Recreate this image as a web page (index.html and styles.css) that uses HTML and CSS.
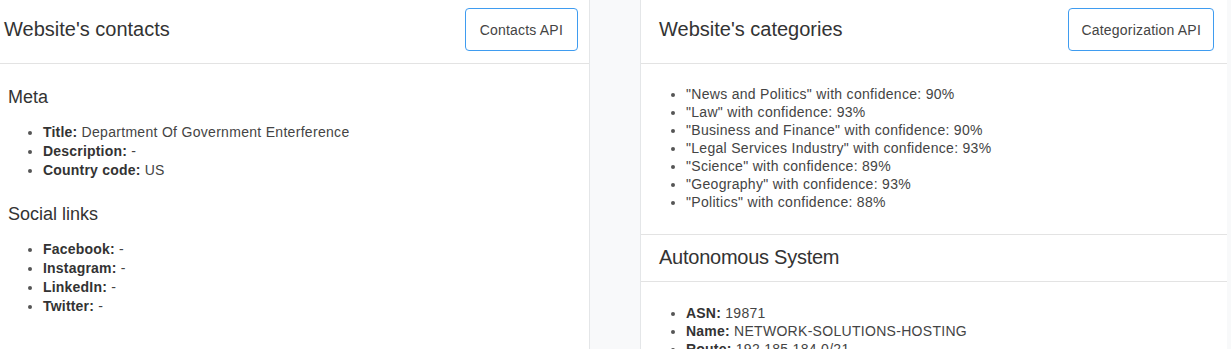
FILE: index.html
```html
<!DOCTYPE html>
<html lang="en">
<head>
<meta charset="utf-8">
<title>Website info</title>
<link rel="stylesheet" href="styles.css">
</head>
<body>
<div class="page">
	<section class="card card-left">
		<header class="card-header">
			<h2 class="card-title">Website's contacts</h2>
			<a class="btn-api" href="#none">Contacts API</a>
		</header>
		<div class="card-body contacts">
			<h3 class="sub-title">Meta</h3>
			<ul class="info-list">
				<li><strong>Title:</strong> Department Of Government Enterference</li>
				<li><strong>Description:</strong> -</li>
				<li><strong>Country code:</strong> US</li>
			</ul>
			<h3 class="sub-title">Social links</h3>
			<ul class="info-list">
				<li><strong>Facebook:</strong> -</li>
				<li><strong>Instagram:</strong> -</li>
				<li><strong>LinkedIn:</strong> -</li>
				<li><strong>Twitter:</strong> -</li>
			</ul>
		</div>
	</section>

	<section class="card card-right">
		<header class="card-header">
			<h2 class="card-title">Website's categories</h2>
			<a class="btn-api" href="#none">Categorization API</a>
		</header>
		<div class="card-body">
			<ul class="info-list">
				<li>"News and Politics" with confidence: 90%</li>
				<li>"Law" with confidence: 93%</li>
				<li>"Business and Finance" with confidence: 90%</li>
				<li>"Legal Services Industry" with confidence: 93%</li>
				<li>"Science" with confidence: 89%</li>
				<li>"Geography" with confidence: 93%</li>
				<li>"Politics" with confidence: 88%</li>
			</ul>
		</div>
		<header class="card-header section-header">
			<h2 class="card-title">Autonomous System</h2>
		</header>
		<div class="card-body as-body">
			<ul class="info-list">
				<li><strong>ASN:</strong> 19871</li>
				<li><strong>Name:</strong> NETWORK-SOLUTIONS-HOSTING</li>
				<li><strong>Route:</strong> 192.185.184.0/21</li>
			</ul>
		</div>
	</section>
</div>
</body>
</html>
```

FILE: styles.css
```css
* {
	margin: 0;
	padding: 0;
	box-sizing: border-box;
}
html, body {
	height: 349px;
	overflow: hidden;
}
body {
	background: #f8f9fa;
	font-family: "Liberation Sans", Arial, sans-serif;
	font-size: 14px;
	color: #333;
}
a {
	color: #333;
	text-decoration: none;
}
ul, li {
	list-style: none;
}

.page {
	display: flex;
	gap: 50px;
	height: 349px;
}

/* cards */
.card {
	background: #fff;
}
.card-left {
	width: 590px;
	border-right: 1px solid #e4e6e8;
}
.card-right {
	width: 587px;
	border-left: 1px solid #e4e6e8;
}

.card-header {
	display: flex;
	align-items: center;
	justify-content: space-between;
	padding: 8px 11px 12px 4px;
	border-bottom: 1px solid #e3e3e3;
}
.card-right .card-header {
	padding: 8px 13px 12px 18px;
}
.card-right .section-header {
	border-top: 1px solid #e3e3e3;
	padding: 11px 19px 12px 18px;
}
.card-title {
	font-size: 20px;
	font-weight: normal;
	line-height: 23px;
	color: #333;
}
.section-header .card-title {
	letter-spacing: -0.25px;
}

.btn-api {
	display: flex;
	align-items: center;
	height: 43px;
	padding: 0 14px;
	border: 1px solid #3f9cf0;
	border-radius: 4px;
	font-size: 14px;
	letter-spacing: 0.2px;
	color: #444;
}
.card-right .btn-api {
	padding: 0 12px;
}

/* body */
.card-body {
	padding: 21px 19px 23px;
}
.card-body.contacts {
	padding: 22px 8px 0;
}
.card-body.as-body {
	padding-top: 22px;
}

.sub-title {
	font-size: 18px;
	font-weight: normal;
	line-height: 22px;
	margin-bottom: 15px;
	color: #333;
}

.info-list {
	padding-left: 26px;
	line-height: 18px;
	letter-spacing: 0.3px;
	color: #444;
}
.info-list li {
	list-style: disc;
}
.info-list li::marker {
	color: #555;
}
.info-list strong {
	font-weight: bold;
	color: #333;
	letter-spacing: 0.2px;
}

.contacts .info-list {
	padding-left: 35px;
	line-height: 19px;
	margin-bottom: 23px;
}
```
